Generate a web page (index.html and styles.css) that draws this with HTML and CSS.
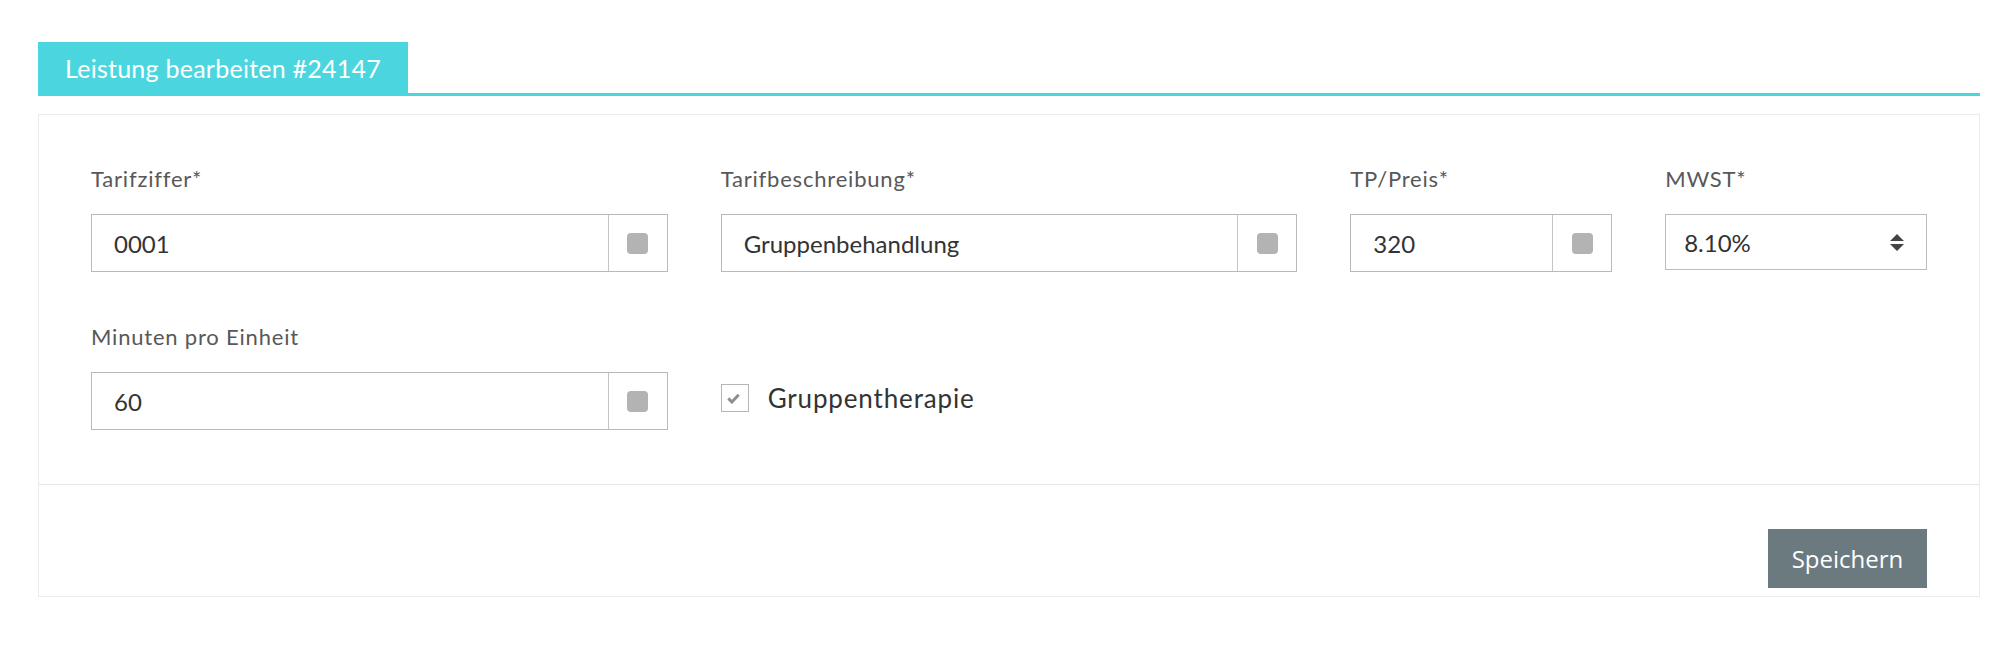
FILE: index.html
```html
<!DOCTYPE html>
<html lang="de">
<head>
<meta charset="utf-8">
<title>Leistung bearbeiten</title>
<link rel="stylesheet" href="styles.css">
</head>
<body>
<div class="page">
  <div class="tabbar">
    <div class="tab">Leistung bearbeiten #24147</div>
  </div>
  <div class="panel">
    <div class="panel-body">
      <div class="grid">
        <div class="field span4">
          <label class="label">Tarifziffer*</label>
          <div class="input-group">
            <div class="input">0001</div>
            <div class="addon"><span class="square"></span></div>
          </div>
        </div>
        <div class="field span4">
          <label class="label">Tarifbeschreibung*</label>
          <div class="input-group">
            <div class="input">Gruppenbehandlung</div>
            <div class="addon"><span class="square"></span></div>
          </div>
        </div>
        <div class="field span2">
          <label class="label">TP/Preis*</label>
          <div class="input-group">
            <div class="input">320</div>
            <div class="addon"><span class="square"></span></div>
          </div>
        </div>
        <div class="field span2">
          <label class="label">MWST*</label>
          <div class="select">
            <span>8.10%</span>
            <svg class="caret" width="14" height="17" viewBox="0 0 14 17"><path d="M7 0L14 7H0Z M0 10H14L7 17Z" fill="#444"/></svg>
          </div>
        </div>
        <div class="field span4">
          <label class="label">Minuten pro Einheit</label>
          <div class="input-group">
            <div class="input">60</div>
            <div class="addon"><span class="square"></span></div>
          </div>
        </div>
        <div class="field span4 check-cell">
          <div class="check-row">
            <span class="checkbox">
              <svg width="13" height="11" viewBox="0 0 13 11"><path d="M1.3 5.4L4.9 9L11.7 1.7" fill="none" stroke="#8f8f8f" stroke-width="3"/></svg>
            </span>
            <span class="check-label">Gruppentherapie</span>
          </div>
        </div>
      </div>
    </div>
    <div class="panel-footer">
      <button class="btn">Speichern</button>
    </div>
  </div>
</div>
</body>
</html>
```

FILE: styles.css
```css
* { box-sizing: border-box; }
html, body { margin: 0; padding: 0; background: #ffffff; }
body { font-family: Lato, "Open Sans", sans-serif; color: #333; }

.page { padding: 42px 34px 0 38px; }

.tabbar {
  display: flex;
  border-bottom: 3px solid #4bd6df;
}
.tab {
  background: #4bd6df;
  color: #ffffff;
  height: 51px;
  padding: 0 27px;
  display: flex;
  align-items: center;
  font-size: 25px;
  letter-spacing: 0.25px;
}

.panel {
  margin-top: 18px;
  border: 1px solid #ebebeb;
}
.panel-body { padding: 52px 52px 54px; }

.grid {
  display: grid;
  grid-template-columns: repeat(12, 1fr);
  column-gap: 53px;
  row-gap: 53px;
}
.span4 { grid-column: span 4; }
.span2 { grid-column: span 2; }

.label {
  display: block;
  font-size: 22px;
  line-height: 23px;
  letter-spacing: 0.8px;
  color: #585858;
  margin-bottom: 24px;
}

.input-group {
  display: flex;
  height: 58px;
  border: 1px solid #b9b9b9;
}
.input {
  flex: 1;
  display: flex;
  align-items: center;
  padding-left: 22px;
  font-size: 24px;
  color: #333;
}
.addon {
  width: 59px;
  border-left: 1px solid #c4c4c4;
  display: flex;
  align-items: center;
  justify-content: center;
}
.square {
  width: 21px;
  height: 21px;
  border-radius: 4px;
  background: #b3b3b3;
}

.select {
  height: 56px;
  border: 1px solid #bdbdbd;
  display: flex;
  align-items: center;
  justify-content: space-between;
  padding: 0 22px 0 18px;
  font-size: 24px;
  color: #333;
}
.caret { display: block; }

.check-cell { padding-top: 57px; }
.check-row {
  display: flex;
  align-items: center;
  gap: 19px;
}
.checkbox {
  width: 28px;
  height: 28px;
  border: 1px solid #b5b5b5;
  display: flex;
  align-items: center;
  justify-content: center;
  padding-right: 3px;
}
.check-label {
  font-size: 26px;
  letter-spacing: 0.85px;
  color: #333;
}

.panel-footer {
  border-top: 1px solid #e8e8e8;
  padding: 44px 52px 8px;
  display: flex;
  justify-content: flex-end;
}
.btn {
  width: 159px;
  height: 59px;
  border: none;
  background: #6b7a7f;
  color: #ffffff;
  font-family: "Open Sans", "Noto Sans", sans-serif;
  font-size: 24px;
  padding: 0;
}
```
